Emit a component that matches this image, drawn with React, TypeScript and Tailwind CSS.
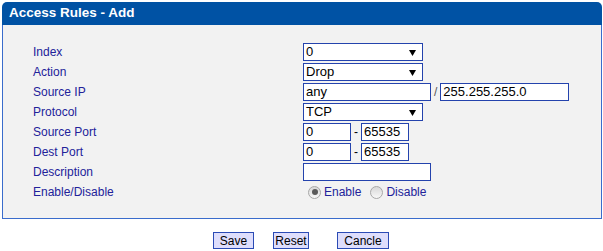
import React from "react";

const Arrow = () => (
  <svg width="7" height="6" viewBox="0 0 7 6" className="absolute right-[6px] top-[6px]">
    <path d="M0 0 L7 0 L3.5 6 Z" fill="#000" />
  </svg>
);

const Select = ({ value }: { value: string }) => (
  <div className="relative w-[120px] h-[18px] border border-[#2443ad] bg-white text-[13px] leading-[16px] pl-[2px] text-black">
    {value}
    <Arrow />
  </div>
);

const Input = ({ value, w }: { value: string; w: string }) => (
  <div className={`${w} h-[18px] border border-[#2443ad] bg-white text-[13px] leading-[16px] pl-[2px] text-black`}>{value}</div>
);

const Radio = ({ checked }: { checked?: boolean }) => (
  <span className="inline-flex items-center justify-center w-[13px] h-[13px] rounded-full border border-[#a8a8a8] bg-gradient-to-b from-[#d8d8d8] to-[#f8f8f8]">
    {checked && <span className="w-[6px] h-[6px] rounded-full bg-[#5a5a5a]" />}
  </span>
);

const Row = ({ label, children }: { label: string; children: React.ReactNode }) => (
  <div className="flex h-[20px] items-center">
    <div className="w-[270px] text-[12px] text-[#22229a]">{label}</div>
    <div className="flex items-center">{children}</div>
  </div>
);

export default function App() {
  return (
    <div className="w-[603px] h-[251px] bg-white" style={{ fontFamily: '"Liberation Sans", Arial, sans-serif' }}>
      <div className="ml-[2px] pt-[2px] w-[600px]">
        <div className="h-[23px] bg-[#0052a4] rounded-t-[5px] text-white font-bold text-[13.5px] pl-[7px] flex items-center">
          Access Rules - Add
        </div>
        <div className="bg-[#f2f2f2] border-x border-b border-[#3a6ccc] pt-[17px] pb-[16px] pl-[30px]">
          <Row label="Index"><Select value="0" /></Row>
          <Row label="Action"><Select value="Drop" /></Row>
          <Row label="Source IP">
            <Input value="any" w="w-[128px]" />
            <span className="text-[12px] text-[#555] mx-[3px]">/</span>
            <Input value="255.255.255.0" w="w-[129px]" />
          </Row>
          <Row label="Protocol"><Select value="TCP" /></Row>
          <Row label="Source Port">
            <Input value="0" w="w-[48px]" />
            <span className="text-[12px] text-black w-[10px] text-center">-</span>
            <Input value="65535" w="w-[48px]" />
          </Row>
          <Row label="Dest Port">
            <Input value="0" w="w-[48px]" />
            <span className="text-[12px] text-black w-[10px] text-center">-</span>
            <Input value="65535" w="w-[48px]" />
          </Row>
          <Row label="Description"><Input value="" w="w-[128px]" /></Row>
          <Row label="Enable/Disable">
            <span className="ml-[5px] flex items-center"><Radio checked /></span>
            <span className="ml-[3px] text-[12px] text-[#22229a]">Enable</span>
            <span className="ml-[9px] flex items-center"><Radio /></span>
            <span className="ml-[3px] text-[12px] text-[#22229a]">Disable</span>
          </Row>
        </div>
        <div className="flex pt-[13px] pl-[211px] text-[12px] text-black">
          <div className="w-[41px] h-[17px] border border-[#2b4bb5] bg-[#dedefc] flex items-center justify-center">Save</div>
          <div className="ml-[19px] w-[36px] h-[17px] border border-[#2b4bb5] bg-[#dedefc] flex items-center justify-center">Reset</div>
          <div className="ml-[28px] w-[52px] h-[17px] border border-[#2b4bb5] bg-[#dedefc] flex items-center justify-center">Cancle</div>
        </div>
      </div>
    </div>
  );
}
